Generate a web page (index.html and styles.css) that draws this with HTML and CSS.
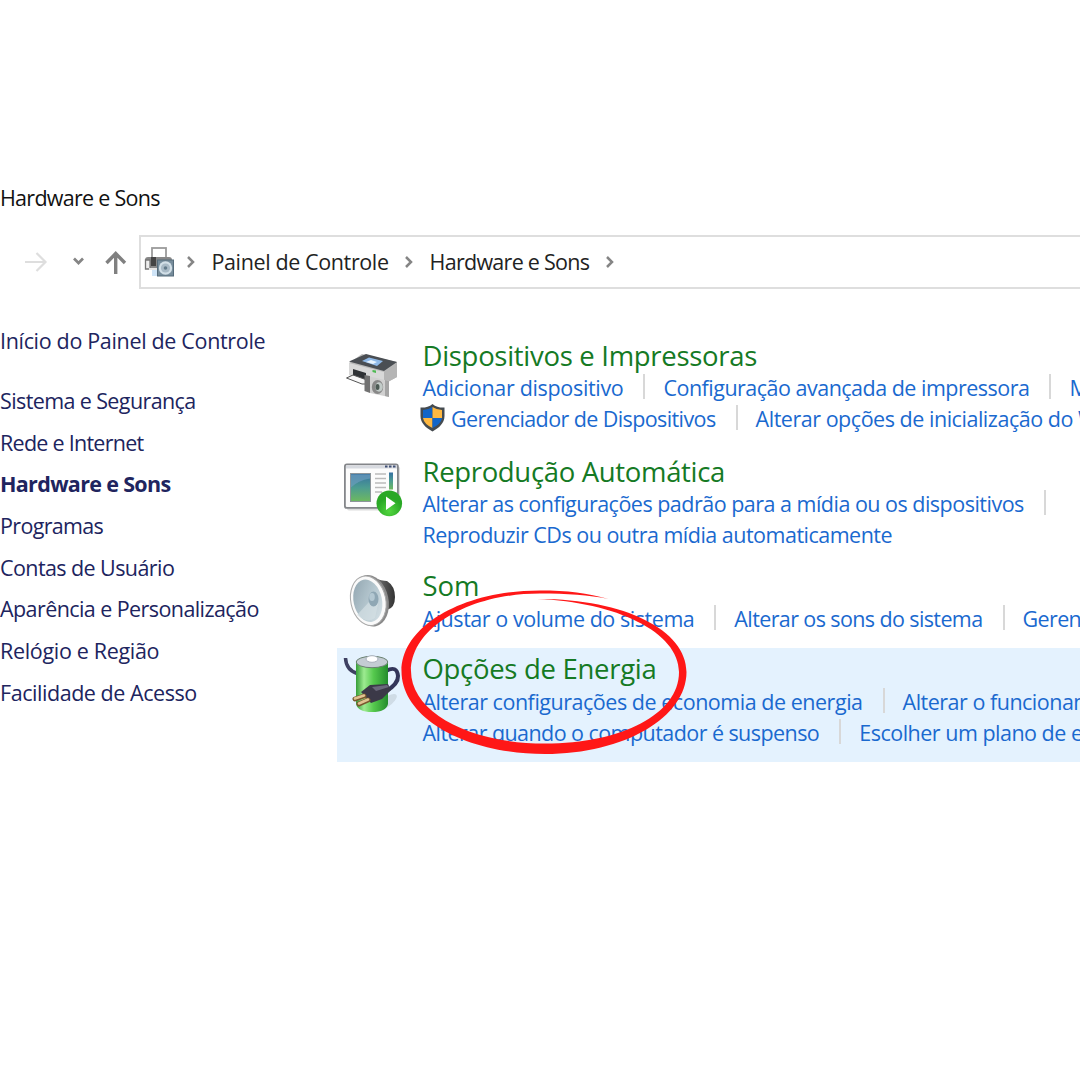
FILE: index.html
```
<!DOCTYPE html>
<html lang="pt-BR">
<head>
<meta charset="utf-8">
<title>Hardware e Sons</title>
<link rel="stylesheet" href="styles.css">
</head>
<body>
<header class="titlebar"><span class="k73">Hardware e Sons</span></header>
<nav class="toolbar">
  <svg class="arrows" width="139" height="54" viewBox="0 0 139 54" fill="none">
    <path d="M25 27H45M36.500 18L45.500 27L36.500 36" stroke="#dedede" stroke-width="2.200"/>
    <path d="M74 23.500L78.500 28L83 23.500" stroke="#858585" stroke-width="2.700"/>
    <path d="M115.700 39V19M106.500 28L115.700 18.500L125 28" stroke="#808080" stroke-width="3.400"/>
  </svg>
  <div class="address">
    <svg class="crumb-icon" width="31" height="32" viewBox="0 0 31 32">
      <rect x="8" y="2" width="14" height="12" fill="#fff" stroke="#9b9b9b" stroke-width="1.800"/>
      <path d="M1 14Q1 11 4 11H25Q28 11 28 14V23H1Z" fill="#888"/>
      <path d="M1.500 14H6V23H1.500Z" fill="#eee" stroke="#777" stroke-width="1.300"/>
      <path d="M7 11H12V20H7Z" fill="#444"/><path d="M5 22H13V24H5Z" fill="#e7e7e7"/>
      <path d="M8 24H14V30H8Z" fill="#cfe4f7"/>
      <rect x="13.500" y="14" width="16" height="16" fill="#768c9b" stroke="#566c7b"/>
      <circle cx="21.500" cy="22" r="6.700" fill="#d2dfe7"/><circle cx="21.500" cy="22" r="4.600" fill="#a9bac6"/><circle cx="21.500" cy="22" r="1.800" fill="#637b8b"/>
    </svg>
    <svg class="chev c1" width="10" height="12" viewBox="0 0 10 12"><path d="M2 1L7 6L2 11"/></svg>
    <span class="k38">Painel de Controle</span>
    <svg class="chev c2" width="10" height="12" viewBox="0 0 10 12"><path d="M2 1L7 6L2 11"/></svg>
    <span class="k73">Hardware e Sons</span>
    <svg class="chev c3" width="10" height="12" viewBox="0 0 10 12"><path d="M2 1L7 6L2 11"/></svg>
  </div>
</nav>
<div class="main">
  <aside class="sidebar">
    <a class="home k33">Início do Painel de Controle</a>
    <a class="k61">Sistema e Segurança</a>
    <a class="k73">Rede e Internet</a>
    <a class="current k67">Hardware e Sons</a>
    <a class="k67">Programas</a>
    <a class="k58">Contas de Usuário</a>
    <a class="k58">Aparência e Personalização</a>
    <a class="k32">Relógio e Região</a>
    <a class="k45">Facilidade de Acesso</a>
  </aside>
  <main class="content">
    <section class="item first">
      <svg class="icon" width="85.500" height="90" viewBox="337 335 85.500 90">
        <path d="M349 363L362 354L397 362V377L384 384L349 375Z" fill="#b9b9b9"/>
        <path d="M349 361.500L366 354L397 362L384 371Z" fill="#4a4e53"/>
        <path d="M362 361L369 357.500L383 361L377 366Z" fill="#8fb9e8"/><path d="M366 362L371 360L377 362L373 364Z" fill="#e8f4ff"/>
        <path d="M349 363L384 372V385L349 375Z" fill="#d8d8d8"/><path d="M384 372L397 363V377L384 384Z" fill="#b5b5b5"/>
        <path d="M353 369L366 373V381L353 376Z" fill="#2f3235"/>
        <path d="M346.500 378L353 375L367 380V384L362 384Z" fill="#f8f8f8" stroke="#555"/>
        <path d="M364.500 375L370 376V393L364.500 391Z" fill="#727272"/><path d="M370 376.500L389 381V397L370 393Z" fill="#d0d0d0"/><path d="M385 380L389 381V397L385 396Z" fill="#a5a5a5"/>
        <path d="M372.500 370L376 370.500V373L372.500 372Z" fill="#4cba51"/>
        <ellipse cx="377.500" cy="387" rx="5.700" ry="7" fill="#888"/><ellipse cx="379" cy="387" rx="3.800" ry="4.700" fill="#c2cbc8"/><ellipse cx="377.500" cy="387" rx="2" ry="3" fill="#4b5953"/>
      </svg>
      <div class="body">
        <h2 class="k30">Dispositivos e Impressoras</h2>
        <p><a class="k32">Adicionar dispositivo</a><i></i><a class="k51">Configuração avançada de impressora</a><i></i><a>Mouse</a></p>
        <p class="shielded"><svg class="shield" width="27" height="29" viewBox="0 0 27 29"><path d="M13.500 1C10 4 5 5 1.500 4.500V13C1.500 20 7 25 13.500 28.500C20 25 25.500 20 25.500 13V4.500C22 5 17 4 13.500 1Z" fill="#454b50"/><path d="M13.500 4Q9 7 4 7V15H13.500Z" fill="#1265c8"/><path d="M13.500 4Q18 7 23 7V15H13.500Z" fill="#ffb840"/><path d="M4 15H13.500V25Q5 21 4 15Z" fill="#ffb840"/><path d="M13.500 15H23Q22 21 13.500 25Z" fill="#1265c8"/></svg><a class="k60">Gerenciador de Dispositivos</a><i></i><a class="k47">Alterar opções de inicialização do Windows</a></p>
      </div>
    </section>
    <section class="item second">
      <svg class="icon" width="85.500" height="90" viewBox="337 450.500 85.500 90">
        <defs><linearGradient id="scr" x2="0" y2="1"><stop stop-color="#356fa1"/><stop offset=".5" stop-color="#4c9c91"/><stop offset="1" stop-color="#6eb95f"/></linearGradient><radialGradient id="play" cy=".8"><stop stop-color="#52d63f"/><stop offset="1" stop-color="#2aa826"/></radialGradient></defs>
        <rect x="347" y="466" width="53" height="44" rx="2" fill="#ddd"/>
        <rect x="344.900" y="463.900" width="53" height="43.500" rx="2" fill="#fcfcfc" stroke="#84868a" stroke-width="1.800"/>
        <path d="M346 465H397V468H346Z" fill="#d7dae0"/><path d="M385 466H396" stroke="#415177" stroke-width="2" stroke-dasharray="2.500 1.500"/>
        <rect x="350.500" y="473" width="20" height="28" fill="url(#scr)" stroke="#8c9499"/>
        <path d="M351 474H370V478Q358 480 351 487Z" fill="#6e9ec0" opacity=".65"/>
        <path d="M375 473.500H386M375 478H386M375 482.500H386M375 487H386M375 491.500H382" stroke="#bbb" stroke-width="1.400"/>
        <rect x="389" y="472" width="4" height="17" fill="url(#scr)"/>
        <circle cx="389.300" cy="502.900" r="12.800" fill="url(#play)"/><path d="M386 496L395.500 502.700L386 509.500Z" fill="#fff"/>
      </svg>
      <div class="body">
        <h2 class="k33">Reprodução Automática</h2>
        <p><a class="k51">Alterar as configurações padrão para a mídia ou os dispositivos</a><i></i></p>
        <p><a class="k51">Reproduzir CDs ou outra mídia automaticamente</a></p>
      </div>
    </section>
    <section class="item third">
      <svg class="icon" width="85.500" height="80" viewBox="337 565 85.500 80">
        <defs><linearGradient id="mag"><stop stop-color="#777"/><stop offset="1" stop-color="#333"/></linearGradient><linearGradient id="cone" x2="1" y2="1"><stop stop-color="#8fa3ae"/><stop offset=".55" stop-color="#b6c8d0"/><stop offset="1" stop-color="#dce6ea"/></linearGradient></defs>
        <path d="M374 578Q382 581 387 581Q395 586 395 597Q395 608 387 610Q384 616 377 622Z" fill="url(#mag)"/>
        <ellipse cx="370.500" cy="600.700" rx="18" ry="26" transform="rotate(-12 370.500 600.700)" fill="#8a8a8a"/>
        <ellipse cx="368.300" cy="600.700" rx="17.500" ry="25" transform="rotate(-12 368.300 600.700)" fill="#fafafa" stroke="#aaa"/>
        <ellipse cx="367.800" cy="600.700" rx="14.200" ry="21.500" transform="rotate(-12 367.800 600.700)" fill="url(#cone)"/>
        <path d="M369 602L357 615Q367 624 375 618L378 604Z" fill="#d4dfe4" opacity=".7"/>
        <ellipse cx="373.500" cy="599" rx="5" ry="7.500" fill="#8fa7b4"/><ellipse cx="372" cy="597" rx="2.800" ry="4" fill="#b4c8d2"/>
      </svg>
      <div class="body">
        <h2>Som</h2>
        <p><a class="k45">Ajustar o volume do sistema</a><i></i><a class="k61">Alterar os sons do sistema</a><i></i><a class="k61">Gerenciar</a></p>
      </div>
    </section>
    <section class="item active">
      <svg class="icon" width="85.500" height="90" viewBox="337 648 85.500 90">
        <defs><linearGradient id="bat"><stop stop-color="#369e38"/><stop offset=".25" stop-color="#9deb91"/><stop offset=".55" stop-color="#55c94d"/><stop offset="1" stop-color="#238c2c"/></linearGradient></defs>
        <ellipse cx="385" cy="703" rx="14" ry="5" fill="#cfdce6" transform="rotate(-35 385 703)"/>
        <path d="M345.500 658Q346 671 359 674" fill="none" stroke="#3e4162" stroke-width="3.500"/>
        <path d="M386 671Q397 665 398 676Q398.500 684 385 692" fill="none" stroke="#33355a" stroke-width="4"/>
        <path d="M356 661V704Q358 712 372 712Q386 712 388 704V661Z" fill="url(#bat)"/>
        <ellipse cx="372" cy="662" rx="15.800" ry="5.700" fill="#c4ccd3" stroke="#69806f"/><ellipse cx="372" cy="659" rx="6" ry="3.300" fill="#fff" stroke="#aab2bd"/>
        <path d="M361 692L370 685L388 684L391 690L382 699L371 703Z" fill="#3b3948"/><path d="M372 687L387 685L389 687L376 691Z" fill="#6a687b"/>
        <path d="M355 699L364 696M359 704L368 700" stroke="#7a572f" stroke-width="5" stroke-linecap="round"/><path d="M355 698.500L364 695.500M359 703.500L368 699.500" stroke="#e0c391" stroke-width="2.600" stroke-linecap="round"/>
      </svg>
      <div class="body">
        <h2 class="k30">Opções de Energia</h2>
        <p><a class="k47">Alterar configurações de economia de energia</a><i></i><a class="k50">Alterar o funcionamento</a></p>
        <p><a class="k56">Alterar quando o computador é suspenso</a><i></i><a class="k50">Escolher um plano de energia</a></p>
      </div>
    </section>
  </main>
</div>
<svg class="marker" width="300" height="175" viewBox="395 585 300 175"><path d="M608.500 599C588 593 567 590.500 540 590.500C463 590.500 401.500 626 401.500 671C401.500 718 465 754 545 754C625 754 686.500 717 686.500 672C686.500 630 624 598.500 537 599C616 602 679 632 679 672C679 714 622 743.500 545 743.500C469 743.500 411 712 411 671C411 628 469 593.500 540 593.500C567 593.500 589 595 608.500 599Z" fill="#ff1717"/></svg>
</body>
</html>
```
FILE: styles.css
```
* { box-sizing: border-box; }
body { margin: 0; width: 1080px; height: 1080px; overflow: hidden; position: relative; background: #fff; font: 21.5px/31px "Open Sans", "Noto Sans", sans-serif; color: #111; white-space: nowrap; }
.titlebar { padding-top: 182px; height: 235px; }
.toolbar { display: flex; height: 54px; }
.address { flex: 1; display: flex; align-items: center; border: 2px solid #dedede; border-right: 0; padding-left: 3px; color: #222; }
.address span { padding-bottom: 2px; }
.chev { fill: none; stroke: #858585; stroke-width: 2.5; }
.c1 { margin: 0 15.5px 0 11px; }
.c2 { margin: 0 16px 0 15px; }
.c3 { margin: 0 16px; }
.main { display: flex; padding-top: 46px; }
.sidebar { width: 337px; display: flex; flex-direction: column; color: #20245e; }
.sidebar a { height: 41.7px; }
.sidebar .home { height: 60px; margin-top: -10px; }
.current { font-weight: 700; }
.content { flex: 1; min-width: 0; overflow: hidden; }
.item { display: flex; padding-top: 2px; }
.first { height: 116px; }
.second { height: 114px; }
.third { height: 83px; }
.active { height: 114px; background: #e4f2fe; }
.icon { flex: none; margin-top: -2px; }
h2 { margin: 0; padding-top: 1px; height: 36px; font-size: 27.5px; font-weight: 400; line-height: 36px; color: #157a24; }
.first h2, .second h2 { height: 35px; }
p { margin: 0; height: 31px; display: flex; color: #1a69cf; }
i { flex: none; width: 2px; height: 25px; background: #d8d8d8; margin: 2px 18px 0 20px; }
.shielded { margin-left: -3.5px; }
.shield { margin-right: 5px; }
.marker { position: absolute; left: 395px; top: 585px; }

/* per-label tracking */
.k30 { letter-spacing: -.3px; }
.k32 { letter-spacing: -.32px; }
.k33 { letter-spacing: -.33px; }
.k38 { letter-spacing: -.38px; }
.k45 { letter-spacing: -.45px; }
.k47 { letter-spacing: -.47px; }
.k50 { letter-spacing: -.5px; }
.k51 { letter-spacing: -.51px; }
.k56 { letter-spacing: -.56px; }
.k58 { letter-spacing: -.58px; }
.k60 { letter-spacing: -.6px; }
.k61 { letter-spacing: -.61px; }
.k67 { letter-spacing: -.67px; }
.k73 { letter-spacing: -.73px; }
```
